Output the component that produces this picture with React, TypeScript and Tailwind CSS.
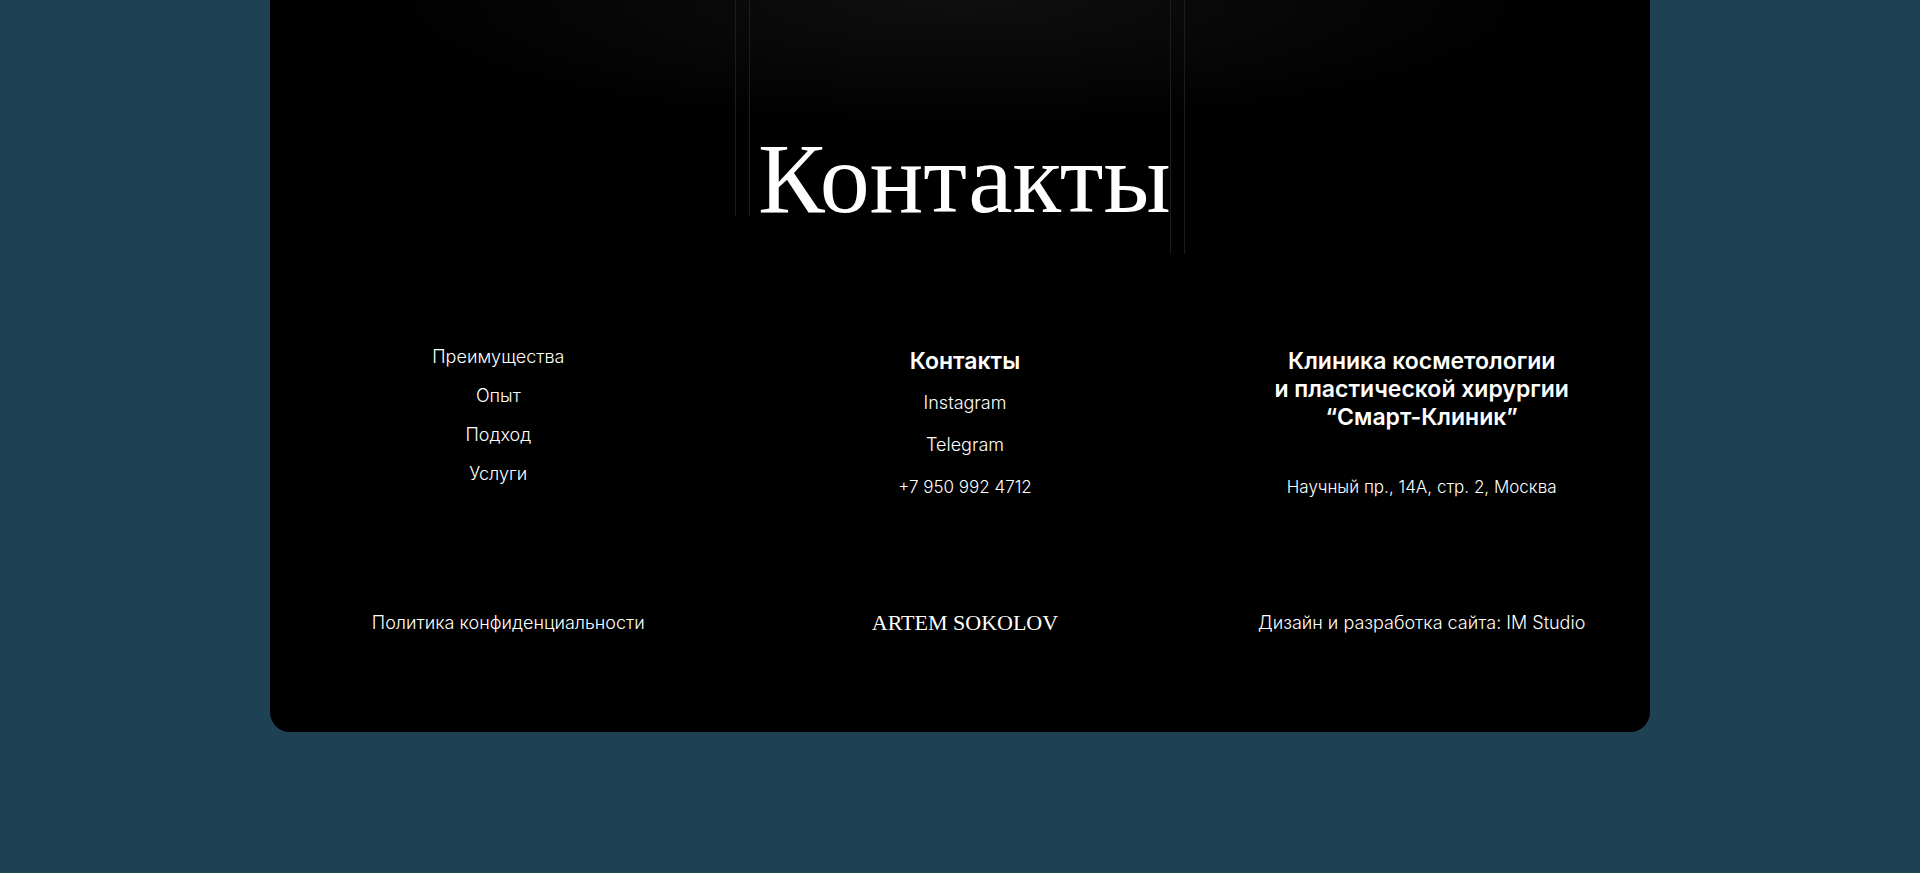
const NAV_LINKS = ['Преимущества', 'Опыт', 'Подход', 'Услуги'];

const SOCIAL_LINKS = [
  { label: 'Instagram', href: '#instagram' },
  { label: 'Telegram', href: '#telegram' },
];

const Hero = () => {
  return (
    <section className="mx-auto flex w-[450px] items-start">
      <div className="h-[216px] w-[15px] shrink-0 border-x border-[#1c1c1c]" />
      <h1 className="w-0 flex-1 whitespace-nowrap pl-2 pt-[123px] font-['Liberation_Serif',serif] text-[100px] leading-[112px]">
        Контакты
      </h1>
      <div className="h-[254px] w-[15px] shrink-0 border-x border-[#1c1c1c]" />
    </section>
  );
};

const Footer = () => {
  return (
    <footer className="pl-[70px] pr-[60px] pt-[91px] text-center text-[18px] font-light leading-6">
      <div className="grid grid-cols-3 gap-x-[120px]">
        <nav className="flex flex-col items-center gap-[15px] pr-5">
          {NAV_LINKS.map((link) => (
            <a key={link} href="#">
              {link}
            </a>
          ))}
        </nav>
        <div className="flex flex-col items-center">
          <h2 className="pt-0.5 text-[23px] font-semibold leading-7">
            Контакты
          </h2>
          <div className="flex flex-col gap-[18px] pt-4">
            {SOCIAL_LINKS.map((link) => (
              <a key={link.label} href={link.href}>
                {link.label}
              </a>
            ))}
            <a href="tel:+79509924712" className="text-[17px]">
              +7 950 992 4712
            </a>
          </div>
        </div>
        <div className="flex flex-col items-center justify-between">
          <h2 className="whitespace-nowrap pt-0.5 text-[23px] font-semibold leading-7">
            Клиника косметологии
            <br />и пластической хирургии
            <br />
            “Смарт-Клиник”
          </h2>
          <address className="whitespace-nowrap text-[17px] not-italic">
            Научный пр., 14А, стр. 2, Москва
          </address>
        </div>
      </div>
      <div className="grid grid-cols-3 items-center gap-x-[120px] whitespace-nowrap pb-[97px] pt-28">
        <a href="#">Политика конфиденциальности</a>
        <a
          href="#"
          className="font-['Liberation_Serif',serif] text-[22px] leading-6"
        >
          ARTEM SOKOLOV
        </a>
        <a href="#">Дизайн и разработка сайта: IM Studio</a>
      </div>
    </footer>
  );
};

const App = () => {
  return (
    <div className="min-h-screen bg-[#1e4254] font-['Inter',sans-serif] text-white">
      <main className="mx-auto w-full max-w-[1380px] overflow-hidden rounded-b-[20px] bg-black bg-[radial-gradient(ellipse_600px_130px_at_50%_0,#0f0f10,#000)]">
        <Hero />
        <Footer />
      </main>
    </div>
  );
};

export default App;
